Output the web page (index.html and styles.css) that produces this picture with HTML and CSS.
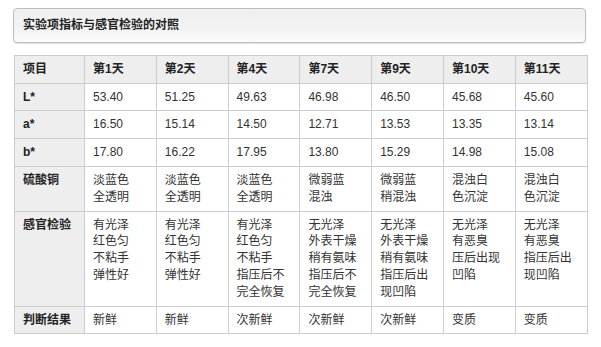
FILE: index.html
```html
<!DOCTYPE html>
<html lang="zh">
<head>
<meta charset="utf-8">
<title>实验项指标与感官检验的对照</title>
<link rel="stylesheet" href="styles.css">
</head>
<body>
<div class="page">
  <div class="caption">实验项指标与感官检验的对照</div>
  <table class="grid">
    <colgroup>
      <col class="c-first">
      <col class="c-day"><col class="c-day"><col class="c-day"><col class="c-day">
      <col class="c-day"><col class="c-day"><col class="c-day">
    </colgroup>
    <thead>
      <tr>
        <th>项目</th><th>第1天</th><th>第2天</th><th>第4天</th><th>第7天</th><th>第9天</th><th>第10天</th><th>第11天</th>
      </tr>
    </thead>
    <tbody>
      <tr><th>L*</th><td>53.40</td><td>51.25</td><td>49.63</td><td>46.98</td><td>46.50</td><td>45.68</td><td>45.60</td></tr>
      <tr><th>a*</th><td>16.50</td><td>15.14</td><td>14.50</td><td>12.71</td><td>13.53</td><td>13.35</td><td>13.14</td></tr>
      <tr><th>b*</th><td>17.80</td><td>16.22</td><td>17.95</td><td>13.80</td><td>15.29</td><td>14.98</td><td>15.08</td></tr>
      <tr><th>硫酸铜</th><td>淡蓝色<br>全透明</td><td>淡蓝色<br>全透明</td><td>淡蓝色<br>全透明</td><td>微弱蓝<br>混浊</td><td>微弱蓝<br>稍混浊</td><td>混浊白<br>色沉淀</td><td>混浊白<br>色沉淀</td></tr>
      <tr><th>感官检验</th><td>有光泽<br>红色匀<br>不粘手<br>弹性好</td><td>有光泽<br>红色匀<br>不粘手<br>弹性好</td><td>有光泽<br>红色匀<br>不粘手<br>指压后不<br>完全恢复</td><td>无光泽<br>外表干燥<br>稍有氨味<br>指压后不<br>完全恢复</td><td>无光泽<br>外表干燥<br>稍有氨味<br>指压后出<br>现凹陷</td><td>无光泽<br>有恶臭<br>压后出现<br>凹陷</td><td>无光泽<br>有恶臭<br>指压后出<br>现凹陷</td></tr>
      <tr><th>判断结果</th><td>新鲜</td><td>新鲜</td><td>次新鲜</td><td>次新鲜</td><td>次新鲜</td><td>变质</td><td>变质</td></tr>
    </tbody>
  </table>
</div>
</body>
</html>
```
FILE: styles.css
```css
html, body {
  margin: 0;
  padding: 0;
  background: #ffffff;
}
body {
  font-family: "Liberation Sans", Arial, "Noto Sans CJK SC", sans-serif;
  font-size: 12px;
  line-height: 16.8px;
  color: #333333;
}
.page {
  padding: 8px 15px 0 13px;
}
.caption {
  width: 573px;
  box-sizing: border-box;
  border: 1px solid #bdbdbd;
  border-radius: 4px;
  padding: 8px 9px;
  font-weight: bold;
  color: #222;
  background: linear-gradient(to bottom, #efefef 0%, #f3f3f3 60%, #fbfbfb 100%);
  box-shadow: 0 1px 1px rgba(0,0,0,0.12);
}
.grid {
  margin: 12px 0 0 1px;
  width: 573px;
  border-collapse: collapse;
  table-layout: fixed;
}
.c-first { width: 70px; }
.c-day { width: 71.8px; }
.grid th, .grid td {
  border: 1px solid #cccccc;
  padding: 5px 8px;
  text-align: left;
  vertical-align: top;
  white-space: nowrap;
}
.grid th {
  font-weight: bold;
  color: #222;
  background: #eeeeee;
}
.grid td {
  background: #ffffff;
  color: #333;
}
```
